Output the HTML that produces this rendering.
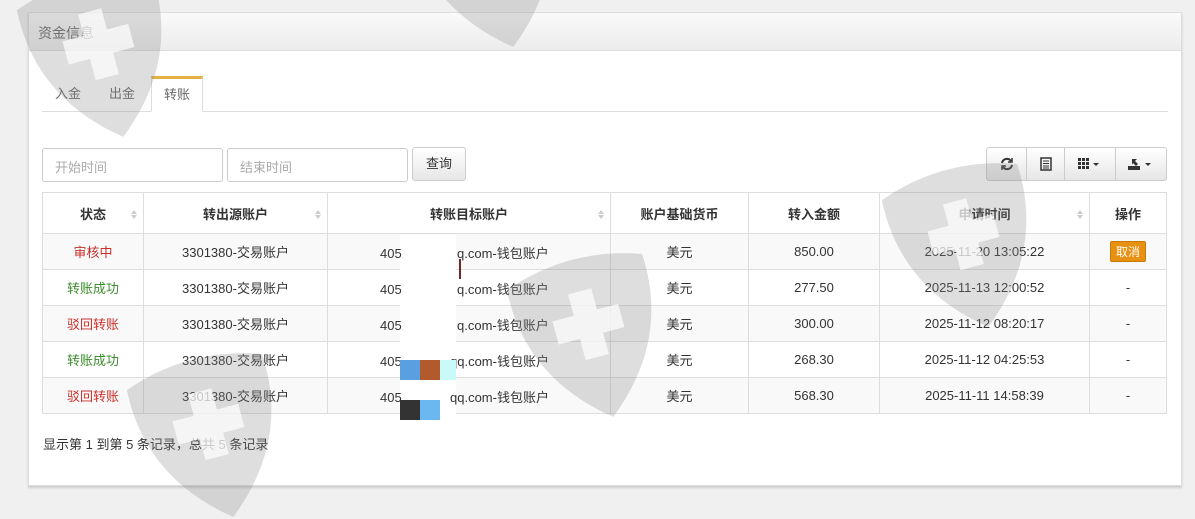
<!DOCTYPE html>
<html><head><meta charset="utf-8">
<style>
*{margin:0;padding:0;box-sizing:border-box}
body{width:1195px;height:519px;overflow:hidden;background:#f0f0f0;font-family:"Liberation Sans","Noto Sans CJK SC",sans-serif;font-size:13px;color:#333;position:relative}
.panel{position:absolute;left:28px;top:12px;width:1154px;height:474px;background:#fff;border:1px solid #ddd;box-shadow:0 2px 2px #ccc}
.ph{height:38px;background:linear-gradient(#fafafa,#ececec);border-bottom:1px solid #ddd;padding:10px 9px;color:#666;font-size:14px}
.tabs{position:absolute;left:13px;top:63px;width:1126px;height:36px;border-bottom:1px solid #ddd}
.tab{position:absolute;top:0;height:36px;line-height:36px;color:#666;font-size:13px}
.tab.act{left:109px;width:52px;border:1px solid #ddd;border-top:3px solid #e5b142;border-bottom:1px solid #fff;background:#fff;text-align:center;line-height:32px;height:36px}
.inp{position:absolute;top:135px;height:34px;border:1px solid #ccc;border-radius:3px;color:#aaa;padding:8px 12px}
.btn{position:absolute;top:134px;height:34px;border:1px solid #ccc;border-radius:3px;background:linear-gradient(#fff,#e6e6e6);text-align:center;line-height:32px}
.tb{position:absolute;top:134px;left:957px;width:181px;height:34px;border:1px solid #ccc;border-radius:3px;background:linear-gradient(#fff,#e6e6e6);display:flex}
.tb div{border-right:1px solid #ccc;display:flex;align-items:center;justify-content:center}
table{position:absolute;left:13px;top:179px;border-collapse:collapse;width:1125px;border:1px solid #ddd}
td,th{border:1px solid #ddd;text-align:center;font-size:13px;position:relative}
th{height:41px;font-weight:bold}
td{height:36px}
tr.s td{background:#f9f9f9}
.sort::after{content:"";position:absolute;right:6px;top:14px;width:0;height:0;border:3px solid transparent;border-bottom:4px solid #ccc;}
.sort::before{content:"";position:absolute;right:6px;top:22px;border:3px solid transparent;border-top:4px solid #ccc}
.red{color:#c9302c}.green{color:#3c8b2c}
.cancel{display:inline-block;background:#e8900f;color:#fff;border:1px solid #c77a08;border-radius:2px;padding:1px 5px;font-size:12px}
.wm{position:absolute;left:0;top:0;pointer-events:none}
.ov{position:absolute;font-size:13px;line-height:18px;height:18px}
</style></head><body>
<div class="panel">
<div class="ph">资金信息</div>
<div class="tabs">
<div class="tab" style="left:13px">入金</div>
<div class="tab" style="left:67px">出金</div>
<div class="tab act">转账</div>
</div>
<div class="inp" style="left:13px;width:181px">开始时间</div>
<div class="inp" style="left:198px;width:181px">结束时间</div>
<div class="btn" style="left:383px;width:54px">查询</div>
<div class="tb">
<div style="width:40px"><svg width="14" height="14" viewBox="0 0 14 14" fill="none" stroke="#333" stroke-width="2"><path d="M2 6a5 5 0 0 1 9-2M12 8a5 5 0 0 1-9 2"/><path d="M12 1v4H8M2 13V9h4" stroke-width="1.5"/></svg></div>
<div style="width:38px"><svg width="12" height="14"><rect x="1" y="1" width="10" height="12" fill="none" stroke="#333" stroke-width="1.5"/><path d="M3 4h6M3 6.5h6M3 9h6M3 11h6" stroke="#333"/></svg></div>
<div style="width:51px"><svg width="24" height="12"><g fill="#333"><rect x="0" y="0" width="3" height="3"/><rect x="4" y="0" width="3" height="3"/><rect x="8" y="0" width="3" height="3"/><rect x="0" y="4" width="3" height="3"/><rect x="4" y="4" width="3" height="3"/><rect x="8" y="4" width="3" height="3"/><rect x="0" y="8" width="3" height="3"/><rect x="4" y="8" width="3" height="3"/><rect x="8" y="8" width="3" height="3"/><path d="M15 5h6l-3 3z"/></g></svg></div>
<div style="width:50px;border-right:none"><svg width="26" height="14"><g fill="#333"><path d="M4 2h5l-2 2 3 3-2 2-3-3-1 2z"/><rect x="0" y="9" width="12" height="4"/><path d="M17 6h6l-3 3z"/></g></svg></div>
</div>
<table>
<tr><th style="width:101px" class="sort">状态</th><th style="width:184px" class="sort">转出源账户</th><th style="width:283px" class="sort">转账目标账户</th><th style="width:138px">账户基础货币</th><th style="width:131px">转入金额</th><th style="width:210px" class="sort">申请时间</th><th>操作</th></tr>
<tr class="s"><td class="red">审核中</td><td>3301380-交易账户</td><td></td><td>美元</td><td>850.00</td><td>2025-11-20 13:05:22</td><td><span class="cancel">取消</span></td></tr>
<tr><td class="green">转账成功</td><td>3301380-交易账户</td><td></td><td>美元</td><td>277.50</td><td>2025-11-13 12:00:52</td><td>-</td></tr>
<tr class="s"><td class="red">驳回转账</td><td>3301380-交易账户</td><td></td><td>美元</td><td>300.00</td><td>2025-11-12 08:20:17</td><td>-</td></tr>
<tr><td class="green">转账成功</td><td>3301380-交易账户</td><td></td><td>美元</td><td>268.30</td><td>2025-11-12 04:25:53</td><td>-</td></tr>
<tr class="s"><td class="red">驳回转账</td><td>3301380-交易账户</td><td></td><td>美元</td><td>568.30</td><td>2025-11-11 14:58:39</td><td>-</td></tr>
</table>
<div style="position:absolute;left:14px;top:421px;font-size:13px">显示第 1 到第 5 条记录，总共 5 条记录</div>
</div>
<div style="position:absolute;left:400px;top:235px;width:56px;height:185px;background:#fff"></div>
<div class="ov" style="left:380px;top:245px">405</div>
<div class="ov" style="left:380px;top:281px">405</div>
<div class="ov" style="left:380px;top:317px">405</div>
<div class="ov" style="left:380px;top:353px">405</div>
<div class="ov" style="left:380px;top:389px">405</div>
<div class="ov" style="left:457px;top:245px">q.com-钱包账户</div>
<div class="ov" style="left:457px;top:281px">q.com-钱包账户</div>
<div class="ov" style="left:457px;top:317px">q.com-钱包账户</div>
<div class="ov" style="left:450px;top:353px">qq.com-钱包账户</div>
<div class="ov" style="left:450px;top:389px">qq.com-钱包账户</div>
<div style="position:absolute;left:459px;top:259px;width:2px;height:20px;background:#6a2a2a"></div>
<div style="position:absolute;left:400px;top:360px;width:20px;height:20px;background:#5aa0e0"></div>
<div style="position:absolute;left:420px;top:360px;width:20px;height:20px;background:#b05a2e"></div>
<div style="position:absolute;left:440px;top:360px;width:16px;height:20px;background:#c8fafa"></div>
<div style="position:absolute;left:400px;top:400px;width:20px;height:20px;background:#333"></div>
<div style="position:absolute;left:420px;top:400px;width:20px;height:20px;background:#6bb8f0"></div>
<svg class="wm" width="1195" height="519">
<defs><g id="sh"><path d="M-70-60Q0-85 70-60Q75 30 0 90Q-75 30-70-60z" fill="#888" opacity=".28"/><path d="M-12-40h24v22h22v24h-22v22h-24v-22h-22v-24h22z" fill="#fff" opacity=".7"/></g></defs>
<use href="#sh" transform="translate(100,50) rotate(-15)"/>
<use href="#sh" transform="translate(490,-40) rotate(-15)"/>
<use href="#sh" transform="translate(965,240) rotate(-15)"/>
<use href="#sh" transform="translate(590,330) rotate(-15)"/>
<use href="#sh" transform="translate(210,430) rotate(-15)"/>
</svg>
</body></html>
